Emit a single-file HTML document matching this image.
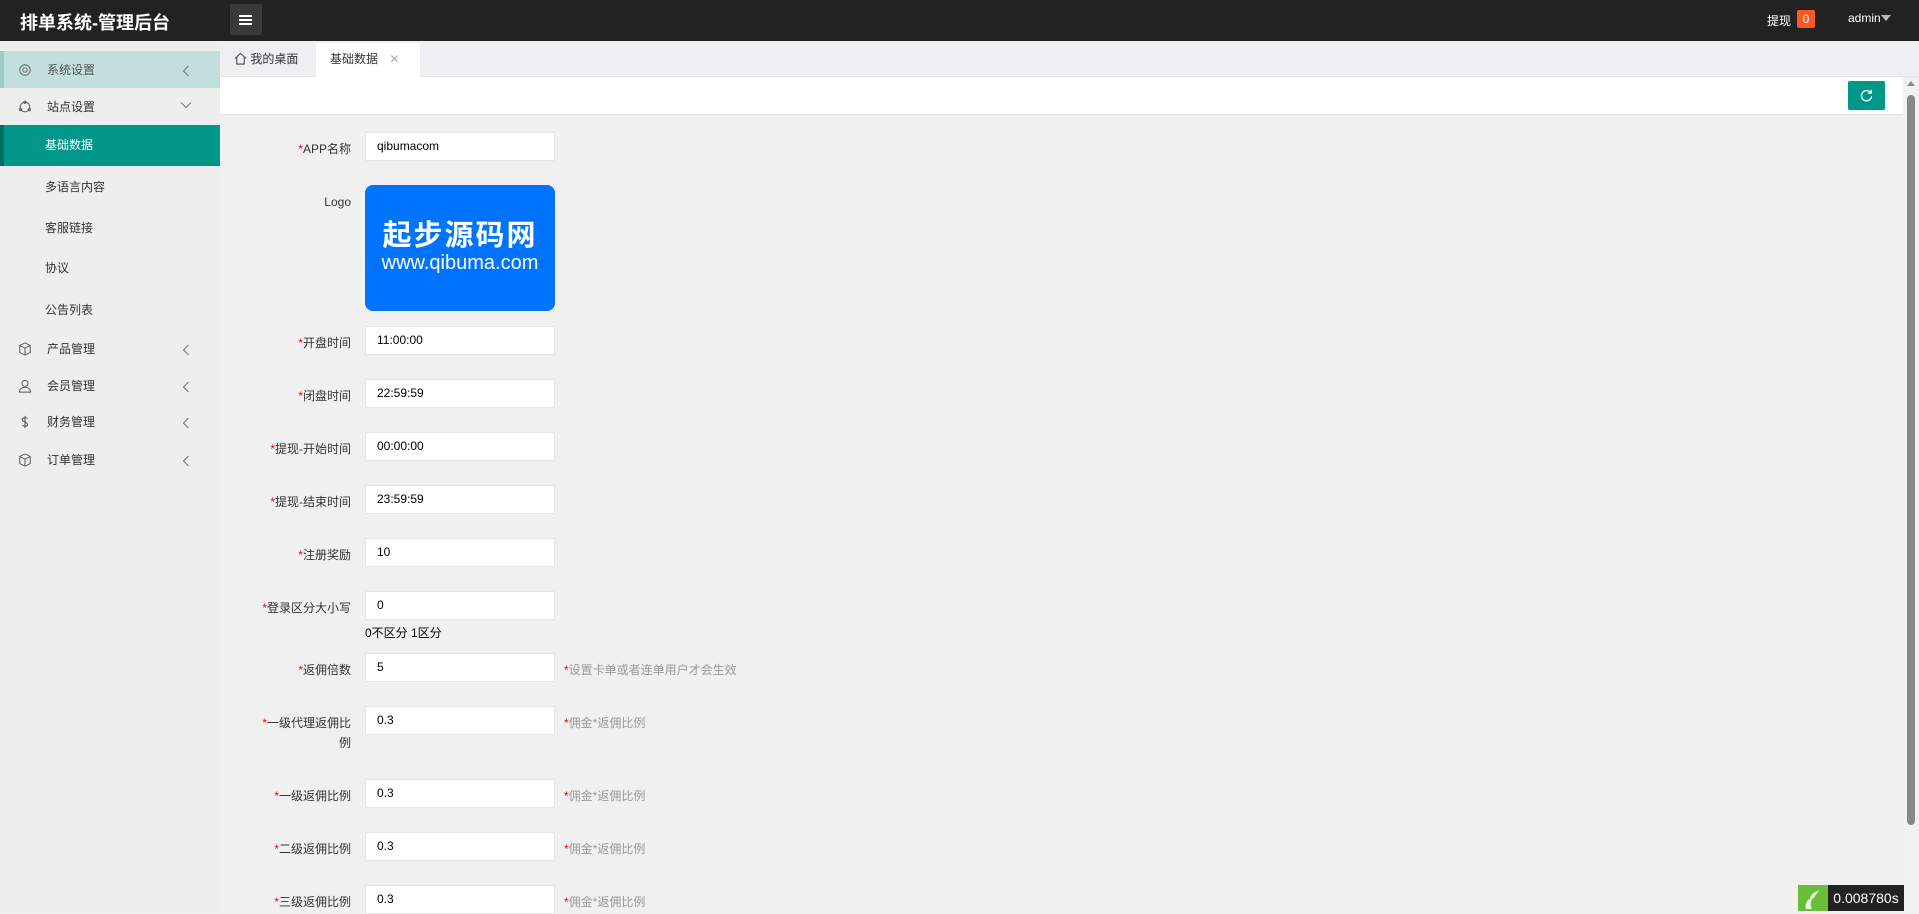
<!DOCTYPE html>
<html><head><meta charset="utf-8"><style>
*{margin:0;padding:0;box-sizing:border-box}
body{width:1919px;height:911px;overflow:hidden;font-family:"Liberation Sans","Noto Sans CJK SC",sans-serif;font-size:13px;color:#333;background:#f0f0f0;position:relative}
.hdr{position:absolute;left:0;top:0;width:1919px;height:41px;background:#222}
.title{position:absolute;left:20px;top:9px;color:#fff;font-size:18px;font-weight:bold}
.mb{position:absolute;left:230px;top:4px;width:32px;height:31px;background:#393939;border-radius:2px}
.mb i{position:absolute;left:9px;width:13px;height:1.5px;background:#fff}
.side{position:absolute;left:0;top:41px;width:220px;height:870px;background:#eee}
.it{position:absolute;left:0;width:220px;height:38px;line-height:38px;padding-left:47px;font-size:12px;color:#333}
.sub{padding-left:45px;font-size:12px}
.arr{position:absolute;left:182px;top:14px;width:8px;height:12px}
.ico{position:absolute;left:18px;top:12px;width:14px;height:14px}
.tabs{position:absolute;left:220px;top:41px;width:1699px;height:36px;background:#eeeff1;border-bottom:1px solid #e2e2e2}
.tab{position:absolute;top:2px;height:34px;line-height:32px;font-size:12px}
.wbar{position:absolute;left:220px;top:77px;width:1683px;height:38px;background:#fff;border-bottom:1px solid #e2e2e2}
.ref{position:absolute;left:1848px;top:81px;width:37px;height:29px;background:#009688;border-radius:2px}
.sb{position:absolute;left:1903px;top:77px;width:16px;height:834px;background:#f1f1f1}
.lbl{position:absolute;width:150px;left:201px;text-align:right;font-size:12px;color:#333}
.lbl b{color:#f00;font-weight:normal}
.in{position:absolute;left:365px;width:190px;height:29px;background:#fff;border:1px solid #e6e6e6;padding-left:11px;line-height:27px;font-size:12px;color:#000}
.hint{position:absolute;left:564px;font-size:12px;color:#999}
.hint b{color:#f00;font-weight:normal}
</style></head><body>
<div class="hdr">
 <div class="title">排单系统-管理后台</div>
 <div class="mb"><i style="top:11px"></i><i style="top:15px"></i><i style="top:19px"></i></div>
 <div style="position:absolute;left:1767px;top:12px;color:#fff;font-size:12px">提现</div>
 <div style="position:absolute;left:1797px;top:10px;width:18px;height:18px;background:#ff5722;color:#fff;font-size:12px;text-align:center;line-height:18px;border-radius:2px">0</div>
 <div style="position:absolute;left:1848px;top:11px;color:#fff;font-size:12px">admin</div>
 <div style="position:absolute;left:1881px;top:15px;width:0;height:0;border-left:5px solid transparent;border-right:5px solid transparent;border-top:6px solid #bbb"></div>
</div>
<div class="side">
 <div class="it" style="top:10px;height:37px;background:#c3dfdd;border-left:4px solid #9ecbc7;padding-left:43px;color:#555">
  <svg class="ico" style="left:14px" viewBox="0 0 16 16" fill="none" stroke="#666" stroke-width="1.1"><circle cx="8" cy="8" r="2.5"/><circle cx="8" cy="8" r="6"/></svg>系统设置<svg class="arr" style="left:178px" viewBox="0 0 8 12" fill="none" stroke="#777" stroke-width="1.1"><path d="M6.5 1L1.5 6L6.5 11"/></svg></div>
 <div class="it" style="top:47px">
  <svg class="ico" viewBox="0 0 16 16" fill="none" stroke="#555" stroke-width="1.1"><circle cx="8" cy="8" r="5.5"/><circle cx="8" cy="2.5" r="1.3"/><circle cx="3" cy="11" r="1.3"/><circle cx="13" cy="11" r="1.3"/></svg>站点设置<svg class="arr" style="left:180px;top:13px;width:12px;height:8px" viewBox="0 0 12 8" fill="none" stroke="#777" stroke-width="1.1"><path d="M1 1.5L6 6.5L11 1.5"/></svg></div>
 <div class="it sub" style="top:84px;height:41px;line-height:41px;background:#009688;color:#fff;border-left:4px solid #006c62;padding-left:41px">基础数据</div>
 <div class="it sub" style="top:127px">多语言内容</div>
 <div class="it sub" style="top:168px">客服链接</div>
 <div class="it sub" style="top:208px">协议</div>
 <div class="it sub" style="top:250px">公告列表</div>
 <div class="it" style="top:289px"><svg class="ico" viewBox="0 0 16 16" fill="none" stroke="#555" stroke-width="1.1"><path d="M8 1L14 4V12L8 15L2 12V4Z M2 4L8 7L14 4 M8 7V15"/></svg>产品管理<svg class="arr" viewBox="0 0 8 12" fill="none" stroke="#777" stroke-width="1.1"><path d="M6.5 1L1.5 6L6.5 11"/></svg></div>
 <div class="it" style="top:326px"><svg class="ico" viewBox="0 0 16 16" fill="none" stroke="#555" stroke-width="1.1"><circle cx="8" cy="5" r="3.5"/><path d="M1.5 15C2 11 5 9.5 8 9.5S14 11 14.5 15Z"/></svg>会员管理<svg class="arr" viewBox="0 0 8 12" fill="none" stroke="#777" stroke-width="1.1"><path d="M6.5 1L1.5 6L6.5 11"/></svg></div>
 <div class="it" style="top:362px"><svg class="ico" viewBox="0 0 16 16" fill="none" stroke="#555" stroke-width="1.2"><path d="M11 4C10 3 6 2.5 5 4.5S7 7.5 8 8 12 10 10.5 12 6 12.5 5 11.5 M8 1V15"/></svg>财务管理<svg class="arr" viewBox="0 0 8 12" fill="none" stroke="#777" stroke-width="1.1"><path d="M6.5 1L1.5 6L6.5 11"/></svg></div>
 <div class="it" style="top:400px"><svg class="ico" viewBox="0 0 16 16" fill="none" stroke="#555" stroke-width="1.1"><path d="M8 1L14 4V12L8 15L2 12V4Z M2 4L8 7L14 4 M8 7V15"/></svg>订单管理<svg class="arr" viewBox="0 0 8 12" fill="none" stroke="#777" stroke-width="1.1"><path d="M6.5 1L1.5 6L6.5 11"/></svg></div>
</div>
<div class="tabs">
 <div class="tab" style="left:0;width:96px;padding-left:14px"><svg width="13" height="13" viewBox="0 0 14 14" fill="none" stroke="#444" stroke-width="1.1" style="vertical-align:-2px"><path d="M1 7L7 1.5L13 7 M3 5.5V13H11V5.5"/></svg> 我的桌面</div>
 <div class="tab" style="left:96px;width:104px;background:#fff;padding-left:14px">基础数据 <span style="color:#aaa;margin-left:8px">✕</span></div>
</div>
<div class="wbar"></div>
<div class="ref"><svg style="position:absolute;left:12px;top:8px" width="13" height="13" viewBox="0 0 14 14" fill="none" stroke="#fff" stroke-width="1.4"><path d="M11.5 4A5.5 5.5 0 1 0 12.5 8"/><path d="M12 1V4.5H8.5"/></svg></div>
<div class="sb"><div style="position:absolute;left:4px;top:4px;border-left:4px solid transparent;border-right:4px solid transparent;border-bottom:5px solid #888"></div><div style="position:absolute;left:4px;top:18px;width:8px;height:730px;background:#888;border-radius:4px"></div></div>

<div class="lbl" style="top:140px"><b>*</b>APP名称</div><div class="in" style="top:132px">qibumacom</div>
<div class="lbl" style="top:195px">Logo</div>
<div style="position:absolute;left:365px;top:185px;width:190px;height:126px;background:#0074ff;border-radius:8px;color:#fff;text-align:center">
 <div style="font-size:29px;font-weight:bold;margin-top:35px;letter-spacing:2px;line-height:32px">起步源码网</div>
 <div style="font-size:20px;line-height:22px;margin-top:0">www.qibuma.com</div></div>
<div class="lbl" style="top:334px"><b>*</b>开盘时间</div><div class="in" style="top:326px">11:00:00</div>
<div class="lbl" style="top:387px"><b>*</b>闭盘时间</div><div class="in" style="top:379px">22:59:59</div>
<div class="lbl" style="top:440px"><b>*</b>提现-开始时间</div><div class="in" style="top:432px">00:00:00</div>
<div class="lbl" style="top:493px"><b>*</b>提现-结束时间</div><div class="in" style="top:485px">23:59:59</div>
<div class="lbl" style="top:546px"><b>*</b>注册奖励</div><div class="in" style="top:538px">10</div>
<div class="lbl" style="top:599px"><b>*</b>登录区分大小写</div><div class="in" style="top:591px">0</div>
<div style="position:absolute;left:365px;top:624px;font-size:12px;color:#000">0不区分 1区分</div>
<div class="lbl" style="top:661px"><b>*</b>返佣倍数</div><div class="in" style="top:653px">5</div><div class="hint" style="top:661px"><b>*</b>设置卡单或者连单用户才会生效</div>
<div class="lbl" style="top:713px;line-height:20px"><b>*</b>一级代理返佣比<br>例</div><div class="in" style="top:706px">0.3</div><div class="hint" style="top:714px"><b>*</b>佣金*返佣比例</div>
<div class="lbl" style="top:787px"><b>*</b>一级返佣比例</div><div class="in" style="top:779px">0.3</div><div class="hint" style="top:787px"><b>*</b>佣金*返佣比例</div>
<div class="lbl" style="top:840px"><b>*</b>二级返佣比例</div><div class="in" style="top:832px">0.3</div><div class="hint" style="top:840px"><b>*</b>佣金*返佣比例</div>
<div class="lbl" style="top:893px"><b>*</b>三级返佣比例</div><div class="in" style="top:885px">0.3</div><div class="hint" style="top:893px"><b>*</b>佣金*返佣比例</div>

<div style="position:absolute;left:1798px;top:885px;width:30px;height:26px;background:#6abf3a"><svg width="30" height="26" viewBox="0 0 30 26"><path d="M8 24C6 18 10 14 16 12C12 16 12 20 14 24Z M12 14C12 9 17 7 22 5C18 9 17 11 16 13Z" fill="#e8f5e0"/></svg></div>
<div style="position:absolute;left:1828px;top:885px;width:76px;height:26px;background:#222;color:#fff;font-size:14px;line-height:26px;text-align:center">0.008780s</div>
</body></html>
